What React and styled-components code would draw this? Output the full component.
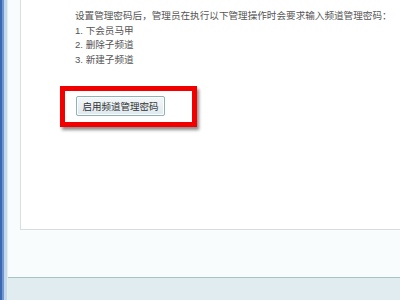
import React from "react";
import styled, { createGlobalStyle } from "styled-components";

const Global = createGlobalStyle`
  html, body { margin: 0; padding: 0; }
  body { width: 400px; height: 300px; overflow: hidden; background: #e0ecef; }
`;

const Page = styled.div`
  display: flex;
  width: 400px;
  height: 300px;
  font-family: "Liberation Sans", "Noto Sans CJK SC", sans-serif;
`;

const LeftStrip = styled.div`
  width: 8px;
  flex: none;
  background: linear-gradient(
    to right,
    #3c67b2 0px, #3c67b2 2px,
    #7097d0 2px, #7097d0 4px,
    #c4d9ec 4px, #c4d9ec 7px,
    #e3eef3 7px, #e3eef3 8px
  );
`;

const Column = styled.div`
  flex: 1;
  display: flex;
  flex-direction: column;
`;

const OuterPanel = styled.div`
  height: 277px;
  flex: none;
  background: #f8fcfd;
  border-bottom: 1px solid #a8c2c8;
  padding-left: 12px;
  display: flex;
  flex-direction: column;
`;

const InnerPanel = styled.div`
  height: 230px;
  flex: none;
  background: #ffffff;
  border-left: 1px solid #d8dfe2;
  border-bottom: 1px solid #d6dee1;
  padding: 9px 0 0 39px;
  box-sizing: border-box;
`;

const TextBlock = styled.div`
  padding-left: 15px;
  color: #555;
  font-size: 9.6px;
  line-height: 14.5px;
  white-space: nowrap;
`;

const Line = styled.div``;

const Highlight = styled.div`
  margin-top: 19px;
  width: 137px;
  height: 41px;
  box-sizing: border-box;
  border: 5px solid #f20000;
  box-shadow: 2px 3px 3px rgba(0, 0, 0, 0.45);
  padding: 5px 0 0 11px;
`;

const Button = styled.button`
  width: 89px;
  height: 20px;
  box-sizing: border-box;
  border: 1px solid #8fb1bc;
  border-radius: 2px;
  background: linear-gradient(to bottom, #f4f8fa, #dfe9ed);
  box-shadow: inset 0 0 0 1px #ffffff;
  color: #333;
  font-family: "Noto Sans CJK SC", sans-serif;
  font-size: 9.5px;
  padding: 0;
  display: flex;
  align-items: center;
  justify-content: center;
`;

const Footer = styled.div`
  flex: 1;
  background: #e0ecef;
`;

export default function App() {
  return (
    <>
      <Global />
      <Page>
        <LeftStrip />
        <Column>
          <OuterPanel>
            <InnerPanel>
              <TextBlock>
                <Line>设置管理密码后，管理员在执行以下管理操作时会要求输入频道管理密码：</Line>
                <Line>1. 下会员马甲</Line>
                <Line>2. 删除子频道</Line>
                <Line>3. 新建子频道</Line>
              </TextBlock>
              <Highlight>
                <Button>启用频道管理密码</Button>
              </Highlight>
            </InnerPanel>
          </OuterPanel>
          <Footer />
        </Column>
      </Page>
    </>
  );
}
